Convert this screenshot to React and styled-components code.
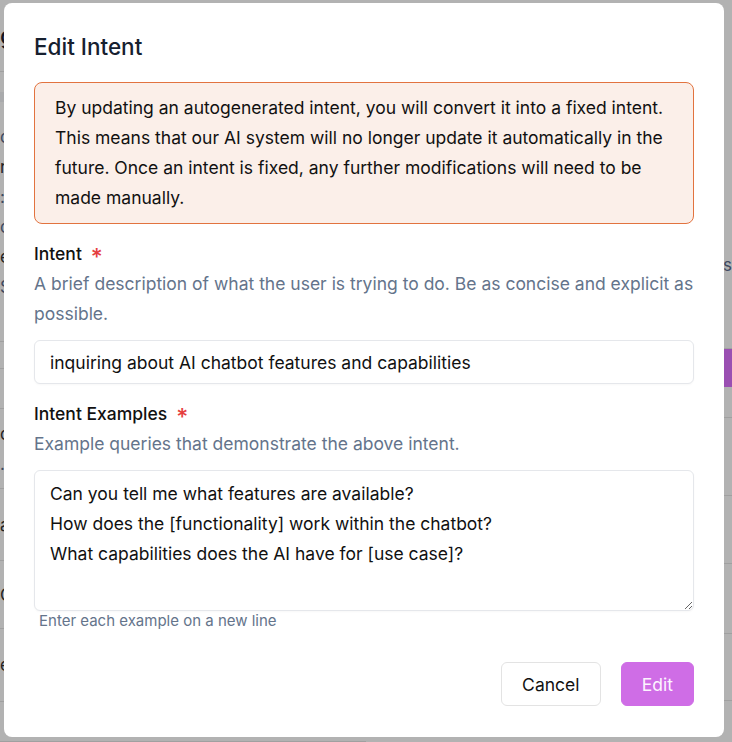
import React from "react";
import styled, { createGlobalStyle } from "styled-components";

const GlobalStyle = createGlobalStyle`
  * {
    box-sizing: border-box;
  }
  html, body {
    margin: 0;
    padding: 0;
    background: #ffffff;
    font-family: Inter, "Noto Sans", sans-serif;
    overflow: hidden;
  }
`;

// page behind the dialog (only its edges show)
const Page = styled.div`
  display: flex;
  width: 732px;
  height: 742px;
  overflow: hidden;
`;

const Column = styled.div`
  flex: 1;
  display: flex;
  flex-direction: column;
  overflow: hidden;
`;

const PageHeader = styled.div`
  height: 88px;
  display: flex;
  align-items: center;
  border-bottom: 1px solid #e6e6e6;
  font-size: 24px;
  font-weight: 500;
  color: #1a2233;
  white-space: nowrap;
`;

const SearchBand = styled.div`
  height: 10px;
  margin: 20px 0;
  background: #f2f4f7;
`;

const PageText = styled.div`
  font-size: 17px;
  line-height: 30px;
  color: ${(p) => p.$color || "#5a6b8c"};
  white-space: nowrap;
  text-align: ${(p) => (p.$right ? "right" : "left")};
`;

const PageBlock = styled.div`
  height: ${(p) => p.$h}px;
  flex-shrink: 0;
  display: flex;
  flex-direction: column;
  justify-content: ${(p) => (p.$top ? "flex-start" : "center")};
  padding-top: ${(p) => p.$pad || 0}px;
  border-bottom: 1px solid #e6e6e6;
`;

const PurpleButton = styled.div`
  height: 38px;
  flex-shrink: 0;
  background: #dd71ff;
`;

const Overlay = styled.div`
  position: fixed;
  inset: 0;
  background: rgba(0, 0, 0, 0.3);
  display: flex;
  align-items: flex-start;
  padding: 3px 8px 5px 4px;
`;

const Dialog = styled.div`
  width: 720px;
  background: #ffffff;
  border-radius: 8px;
  padding: 30px 30px 31px;
  display: flex;
  flex-direction: column;
`;

const Title = styled.h2`
  margin: 0;
  font-size: 22.5px;
  line-height: 28px;
  font-weight: 500;
  color: #16202f;
`;

const Alert = styled.div`
  margin-top: 21px;
  padding: 10px 20px;
  border: 1px solid #e2733f;
  border-radius: 8px;
  background: #fbefe9;
  font-size: 17.5px;
  line-height: 30px;
  color: #111111;
`;

const Field = styled.div`
  margin-top: 15px;
  display: flex;
  flex-direction: column;
`;

const Label = styled.label`
  font-size: 17.5px;
  line-height: 30px;
  font-weight: 500;
  color: #111111;
  display: flex;
  align-items: center;
`;

const Required = styled.span`
  margin-left: 9px;
  color: #e53e3e;
  font-size: 23px;
  line-height: 30px;
  position: relative;
  top: 3px;
`;

const Hint = styled.div`
  font-size: 17.5px;
  line-height: 30px;
  color: #64748b;
`;

const TextInput = styled.input`
  margin-top: 11px;
  height: 44px;
  width: 100%;
  padding: 0 15px;
  border: 1px solid #e5e7eb;
  border-radius: 6px;
  font-family: Inter, "Noto Sans", sans-serif;
  font-size: 17.5px;
  color: #111111;
  background: #ffffff;
  outline: none;
  box-shadow: 0 1px 2px rgba(0, 0, 0, 0.03);
`;

const TextArea = styled.textarea`
  margin-top: 11px;
  height: 141px;
  width: 100%;
  padding: 8px 15px;
  border: 1px solid #e5e7eb;
  border-radius: 6px;
  font-family: Inter, "Noto Sans", sans-serif;
  font-size: 17.5px;
  line-height: 30px;
  color: #111111;
  background: #ffffff;
  outline: none;
  resize: vertical;
  display: block;
  box-shadow: 0 1px 2px rgba(0, 0, 0, 0.03);
`;

const Helper = styled.div`
  padding-left: 5px;
  font-size: 15px;
  line-height: 20px;
  color: #64748b;
`;

const Footer = styled.div`
  margin-top: 31px;
  display: flex;
  justify-content: flex-end;
  gap: 20px;
`;

const Button = styled.button`
  height: 44px;
  padding: 0 20px;
  border-radius: 6px;
  font-family: Inter, "Noto Sans", sans-serif;
  font-size: 17.5px;
  font-weight: 400;
  cursor: pointer;
  border: 1px solid ${(p) => (p.$primary ? "#cf6de6" : "#e3e3e3")};
  background: ${(p) => (p.$primary ? "#cf6de6" : "#ffffff")};
  color: ${(p) => (p.$primary ? "#fdf4ff" : "#111111")};
  min-width: ${(p) => (p.$primary ? "72px" : "100px")};
`;

const examples = [
  "Can you tell me what features are available?",
  "How does the [functionality] work within the chatbot?",
  "What capabilities does the AI have for [use case]?",
].join("\n");

function BackgroundPage() {
  return (
    <Page>
      <Column>
        <PageHeader>g</PageHeader>
        <PageBlock $h={270} $top>
          <SearchBand />
          <PageText>create</PageText>
          <PageText $color="#333">rules</PageText>
          <PageText>:</PageText>
          <PageText>condition</PageText>
          <PageText $color="#333">e:</PageText>
          <PageText>Support</PageText>
        </PageBlock>
        <PageBlock $h={27} />
        <PageBlock $h={40} />
        <PageBlock $h={80}>
          <PageText $color="#333">c(</PageText>
          <PageText>.</PageText>
        </PageBlock>
        <PageBlock $h={72}>
          <PageText $color="#333">a</PageText>
        </PageBlock>
        <PageBlock $h={68}>
          <PageText $color="#333">C</PageText>
        </PageBlock>
        <PageBlock $h={73}>
          <PageText $color="#333">e</PageText>
        </PageBlock>
        <PageBlock $h={40} />
      </Column>
      <Column>
        <PageBlock $h={349} $top $pad={250}>
          <PageText $right>settings</PageText>
        </PageBlock>
        <PurpleButton />
        <PageBlock $h={31} />
        <PageBlock $h={78} />
        <PageBlock $h={68} />
        <PageBlock $h={70} />
        <PageBlock $h={67} />
        <PageBlock $h={60} />
      </Column>
    </Page>
  );
}

export default function App() {
  return (
    <>
      <GlobalStyle />
      <BackgroundPage />
      <Overlay>
        <Dialog>
          <Title>Edit Intent</Title>
          <Alert>
            By updating an autogenerated intent, you will convert it into a
            fixed intent. This means that our AI system will no longer update
            it automatically in the future. Once an intent is fixed, any further
            modifications will need to be made manually.
          </Alert>
          <Field>
            <Label>
              Intent<Required>*</Required>
            </Label>
            <Hint>
              A brief description of what the user is trying to do. Be as
              concise and explicit as possible.
            </Hint>
            <TextInput
              defaultValue="inquiring about AI chatbot features and capabilities"
            />
          </Field>
          <Field>
            <Label>
              Intent Examples<Required>*</Required>
            </Label>
            <Hint>Example queries that demonstrate the above intent.</Hint>
            <TextArea defaultValue={examples} />
            <Helper>Enter each example on a new line</Helper>
          </Field>
          <Footer>
            <Button>Cancel</Button>
            <Button $primary>Edit</Button>
          </Footer>
        </Dialog>
      </Overlay>
    </>
  );
}
